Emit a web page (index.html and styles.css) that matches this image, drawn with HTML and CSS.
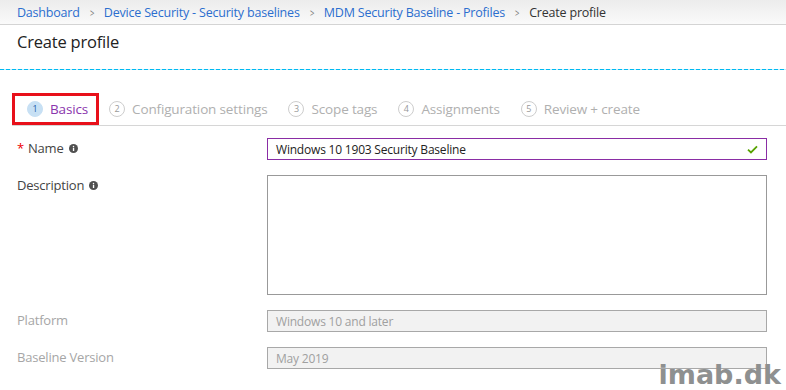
FILE: index.html
```html
<!DOCTYPE html>
<html lang="en">
<head>
    <meta charset="UTF-8">
    <title>Create profile</title>
    <link rel="stylesheet" href="styles.css">
</head>
<body>

<nav class="breadcrumb">
    <a href="#">Dashboard</a>
    <span class="sep">&gt;</span>
    <a href="#">Device Security - Security baselines</a>
    <span class="sep">&gt;</span>
    <a href="#">MDM Security Baseline - Profiles</a>
    <span class="sep">&gt;</span>
    <span class="current">Create profile</span>
</nav>

<header class="blade-header">
    <h1>Create profile</h1>
</header>
<div class="dashed"></div>

<div class="tabs">
    <div class="tab active"><span class="step">1</span><span class="tab-label">Basics</span></div>
    <div class="tab"><span class="step">2</span><span class="tab-label">Configuration settings</span></div>
    <div class="tab"><span class="step">3</span><span class="tab-label">Scope tags</span></div>
    <div class="tab"><span class="step">4</span><span class="tab-label">Assignments</span></div>
    <div class="tab"><span class="step">5</span><span class="tab-label">Review + create</span></div>
</div>

<form class="form">
    <div class="row">
        <label class="label"><span class="req">*</span> Name
            <svg class="info" viewBox="0 0 10 10"><circle cx="5" cy="5" r="5" fill="#505050"/><rect x="4.3" y="4.2" width="1.5" height="3.6" fill="#fff"/><circle cx="5" cy="2.7" r="0.85" fill="#fff"/></svg>
        </label>
        <div class="field valid">
            <span class="value">Windows 10 1903 Security Baseline</span>
            <svg class="check" viewBox="0 0 12 10"><path d="M1 5.2 L4.3 8.3 L11 1.5" fill="none" stroke="#57a300" stroke-width="2"/></svg>
        </div>
    </div>
    <div class="row">
        <label class="label">Description
            <svg class="info" viewBox="0 0 10 10"><circle cx="5" cy="5" r="5" fill="#505050"/><rect x="4.3" y="4.2" width="1.5" height="3.6" fill="#fff"/><circle cx="5" cy="2.7" r="0.85" fill="#fff"/></svg>
        </label>
        <div class="field textarea"></div>
    </div>
    <div class="row">
        <label class="label disabled">Platform</label>
        <div class="field readonly">Windows 10 and later</div>
    </div>
    <div class="row">
        <label class="label disabled">Baseline Version</label>
        <div class="field readonly">May 2019</div>
    </div>
</form>

<div class="watermark">imab.dk</div>

</body>
</html>
```

FILE: styles.css
```css
html, body {
    margin: 0;
}
body {
    font-family: 'Open Sans', 'Noto Sans', sans-serif;
    color: #333;
    background-color: white;
    width: 786px;
    height: 390px;
    overflow: hidden;
    position: relative;
}
.breadcrumb {
    height: 25px;
    box-sizing: border-box;
    padding: 0 17px;
    display: flex;
    align-items: center;
    font-size: 12.5px;
    letter-spacing: -0.2px;
    background: linear-gradient(to bottom, #ececec, #fafafa);
    border-bottom: 1px solid #d4d4d4;
}
.breadcrumb a {
    color: #2b6ecf;
    text-decoration: none;
}
.breadcrumb .sep {
    color: #777;
    margin: 0 9px;
    font-size: 11px;
    transform: scaleX(0.7);
}
.breadcrumb .current {
    color: #333;
}
.blade-header {
    height: 44px;
    box-sizing: border-box;
    padding: 5px 17px 0;
}
.blade-header h1 {
    margin: 0;
    font-size: 16.5px;
    font-weight: normal;
    color: #222;
    letter-spacing: -0.2px;
}
/* dashed divider under the blade title */
.dashed {
    height: 1px;
    background: repeating-linear-gradient(to right, #00b9f2 0 4px, #bfeefc 4px 6px);
}
.tabs {
    display: flex;
    margin: 23px 0 0 12px;
    height: 32px;
    border-bottom: 1px solid #d6d6d6;
}
.tab {
    display: flex;
    align-items: center;
    padding: 0 11px 0 10px;
    font-size: 13.5px;
    letter-spacing: -0.15px;
    color: #b0b0b0;
}
.tab.active {
    padding-left: 15px;
    color: #8a35ad;
    outline: 3px solid #e8101a;
    outline-offset: -3px;
}
.step {
    width: 16px;
    height: 16px;
    box-sizing: border-box;
    border: 1px solid #cdcdcd;
    border-radius: 50%;
    font-size: 9px;
    line-height: 14px;
    text-align: center;
    color: #999;
    margin-right: 7px;
    letter-spacing: 0;
}
.tab.active .step {
    background-color: #c7e0f4;
    border-color: #c7e0f4;
    color: #1a5aa8;
}
.form {
    margin-top: 12px;
    padding: 0 19px 0 17px;
}
.row {
    display: flex;
    margin-bottom: 15px;
}
.label {
    width: 250px;
    font-size: 13px;
    letter-spacing: -0.2px;
    color: #444;
    display: flex;
    align-items: center;
    align-self: flex-start;
    height: 20px;
}
.label.disabled {
    color: #a6a6a6;
}
.req {
    color: #e00;
    margin-right: 4px;
}
.info {
    width: 9px;
    height: 9px;
    margin-left: 5px;
}
.field {
    flex: 1;
    height: 22px;
    box-sizing: border-box;
    border: 1px solid #999;
    padding: 0 8px;
    font-size: 12px;
    letter-spacing: -0.2px;
    display: flex;
    align-items: center;
    color: #222;
}
.field.valid {
    border-color: #8a2da5;
    justify-content: space-between;
}
.check {
    width: 11px;
    height: 9px;
}
.field.textarea {
    height: 120px;
}
.field.readonly {
    background-color: #f2f2f2;
    border-color: #a8a8a8;
    color: #a0a0a0;
}
.watermark {
    position: absolute;
    right: 5px;
    bottom: 0;
    line-height: 30px;
    font-family: 'DejaVu Sans', sans-serif;
    font-weight: bold;
    font-size: 27px;
    color: #8e9090;
}
```
